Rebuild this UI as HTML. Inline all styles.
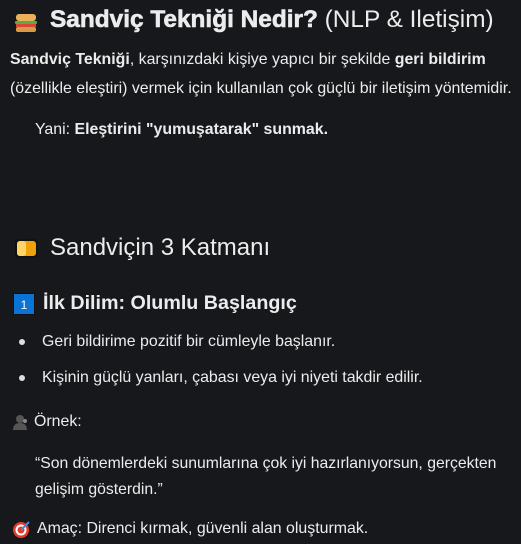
<!DOCTYPE html>
<html><head><meta charset="utf-8"><style>
body{margin:0;width:521px;height:544px;background:#17181b;color:#ececec;font-family:"Segoe UI","Liberation Sans","DejaVu Sans",sans-serif;overflow:hidden;position:relative}
.l{position:absolute;white-space:nowrap;font-size:15.9px;line-height:20px}
b{font-weight:bold}
.ic{position:absolute}
</style></head><body>
<svg class="ic" style="left:14px;top:11px" width="24" height="24" viewBox="0 0 24 24"><rect x="2" y="3" width="20" height="7" rx="3" fill="#e9b25a"/><rect x="1" y="10" width="22" height="3" rx="1" fill="#5cae3a"/><rect x="2" y="13" width="20" height="3" fill="#d9453a"/><rect x="2" y="16" width="20" height="5" rx="2" fill="#d99a44"/></svg>
<div class="l" style="left:50px;top:5px;font-size:24.4px;line-height:30px"><b style="font-weight:900;-webkit-text-stroke:0.6px #ececec">Sandviç Tekniği Nedir?</b> (NLP &amp; Iletişim)</div>
<div class="l" style="left:10px;top:50px"><b>Sandviç Tekniği</b>, karşınızdaki kişiye yapıcı bir şekilde <b>geri bildirim</b></div>
<div class="l" style="left:10px;top:79px">(özellikle eleştiri) vermek için kullanılan çok güçlü bir iletişim yöntemidir.</div>
<div class="l" style="left:35px;top:120px">Yani: <b>Eleştirini "yumuşatarak" sunmak.</b></div>
<svg class="ic" style="left:14px;top:238px" width="25" height="22" viewBox="0 0 25 22"><rect x="1" y="1" width="23" height="19" rx="4" fill="#111"/><rect x="3" y="3" width="19" height="15" rx="3" fill="#eda20a"/><rect x="3" y="3" width="9" height="15" rx="3" fill="#ffd56a"/></svg>
<div class="l" style="left:50px;top:233px;font-size:24px;line-height:30px">Sandviçin 3 Katmanı</div>
<svg class="ic" style="left:13px;top:293px" width="22" height="22" viewBox="0 0 22 22"><rect x="0" y="0" width="22" height="22" fill="#111"/><rect x="1" y="1" width="20" height="20" fill="#0a73d4"/><text x="11" y="16" font-size="12" fill="#fff" text-anchor="middle" font-family="Liberation Sans">1</text></svg>
<div class="l" style="left:43px;top:290px;font-size:19.7px;line-height:26px"><b>İlk Dilim: Olumlu Başlangıç</b></div>
<div class="ic" style="left:19px;top:339px;width:6px;height:6px;border-radius:50%;background:#ddd"></div>
<div class="l" style="left:42px;top:332px">Geri bildirime pozitif bir cümleyle başlanır.</div>
<div class="ic" style="left:19px;top:375px;width:6px;height:6px;border-radius:50%;background:#ddd"></div>
<div class="l" style="left:42px;top:368px">Kişinin güçlü yanları, çabası veya iyi niyeti takdir edilir.</div>
<svg class="ic" style="left:12px;top:413px" width="18" height="18" viewBox="0 0 18 18"><circle cx="8" cy="6" r="4" fill="#555"/><path d="M1 17c0-5 3-7 7-7s7 2 7 7z" fill="#555"/><circle cx="13" cy="8" r="2" fill="#888"/></svg>
<div class="l" style="left:34px;top:412px">Örnek:</div>
<div class="l" style="left:35px;top:454px;font-size:15.75px">“Son dönemlerdeki sunumlarına çok iyi hazırlanıyorsun, gerçekten</div>
<div class="l" style="left:35px;top:480px;font-size:15.75px">gelişim gösterdin.”</div>
<svg class="ic" style="left:12px;top:520px" width="19" height="19" viewBox="0 0 19 19"><circle cx="9" cy="10" r="8" fill="#e23b2e"/><circle cx="9" cy="10" r="5.5" fill="#fff"/><circle cx="9" cy="10" r="3.5" fill="#e23b2e"/><path d="M9 10L17 2" stroke="#3a8fe0" stroke-width="2"/></svg>
<div class="l" style="left:37px;top:519px">Amaç: Direnci kırmak, güvenli alan oluşturmak.</div>
</body></html>
